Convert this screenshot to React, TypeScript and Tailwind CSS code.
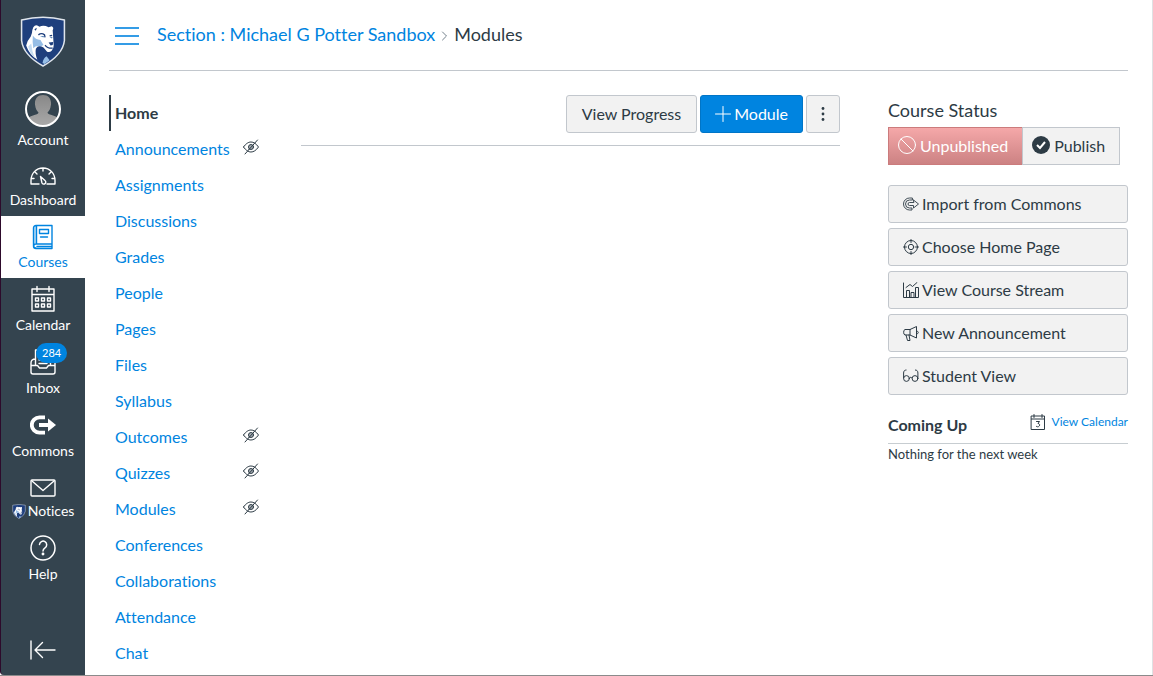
import type { ReactNode } from 'react';

type IconProps = { className?: string };

const stroke = { fill: 'none', stroke: 'currentColor', strokeLinecap: 'round', strokeLinejoin: 'round' } as const;

function Shield({ className }: IconProps) {
  return (
    <svg viewBox="0 0 45 50" className={className} aria-hidden="true">
      <path d="M1.500 4 Q22.500 -1.500 43.500 4 V24 Q42 38 22.500 49 Q3 38 1.500 24Z" fill="#1e3f7d" stroke="#dfe5ec" strokeWidth="1.500" />
      <path d="M13 11 Q15 8 17.500 9.500 L19 10.500 Q23 8.500 28 11 L31 10 Q33.500 11 32 14 L32.500 21 L33 29 Q33 32 31 34 Q29 36 26.500 35 L23 31 L20 29.500 Q17 29 15.500 32 Q14.500 37 17 43 Q9 38 6 29 Q7 24 10.500 20 Q12 17 12 14Z" fill="#fff" />
      <path d="M12.500 19 Q15 23 20 23.500 L23 28.500 L20 30 Q16 28.500 13 31.500 Q12 25 12.500 19Z" fill="#96bee6" />
      <path d="M11 27 Q11.500 35 14.500 41 Q9.500 37 8 30Z" fill="#c5dcf1" />
      <path d="M22 46 Q23 41 26 39.500 L29 43.500 L24 47Z" fill="#96bee6" />
      <path d="M14 13 L16.500 11.500 L15.500 14.500Z" fill="#1e3f7d" />
      <path d="M18 18.500 Q21 16 24 18.500 L24.500 21 M29 19.500 L31.500 19" fill="none" stroke="#1e3f7d" strokeWidth="1.300" />
      <path d="M19.500 19.500 L23.500 19.500 L23 21Z M29 20.500 H32 L31 22Z" fill="#5d87ba" />
      <path d="M28 26 L32.500 25.500 L32 28.500 L30 29Z" fill="#1e3f7d" />
      <path d="M24.500 28.500 Q27 32 32 31.500" fill="none" stroke="#1e3f7d" strokeWidth="1.200" />
    </svg>
  );
}

function AvatarIcon() {
  return (
    <svg viewBox="0 0 36 36" className="size-9" aria-hidden="true">
      <defs>
        <clipPath id="avatar"><circle cx="18" cy="18" r="16.500" /></clipPath>
        <linearGradient id="person" x2="0" y2="1"><stop stopColor="#888" /><stop offset="1" stopColor="#aaa" /></linearGradient>
      </defs>
      <circle cx="18" cy="18" r="17" fill="#34444f" />
      <g clipPath="url(#avatar)" fill="url(#person)">
        <path d="M18 4c5.500 0 8.500 4 8 9.500C25.500 18 24 20 22.500 21.500c0 1.500 2.500 2 5.500 3 4 1 6 3 7 6V36H1v-5c1-4 3-5.500 7-6.500 3-1 5.500-1.500 5.500-3-1.500-1.500-3-3.500-3.500-8C9.500 8 12.500 4 18 4Z" />
      </g>
      <circle cx="18" cy="18" r="17" fill="none" stroke="#fff" strokeWidth="2" />
    </svg>
  );
}

function DashboardIcon() {
  return (
    <svg viewBox="0 0 26 20" className="h-5 w-[26px]" {...stroke} strokeWidth="1.400" aria-hidden="true">
      <path d="M9 18H1v-3.500C1 7.500 6 2 13 2s12 5.500 12 12.500V18h-8M13 2v3M5 6l2 2M21 6l-2 2M1.500 12.500H4M22 12.500h2.500" />
      <path d="M10.500 10.500 15 14.500a2 2 0 1 1-3 2.500Z" />
    </svg>
  );
}

function CoursesIcon() {
  return (
    <svg viewBox="0 0 22 26" className="h-[26px] w-[22px]" {...stroke} strokeWidth="1.400" aria-hidden="true">
      <path d="M4 1.500h1v18H4L2 21V3Z" fill="#b5dbf6" stroke="none" />
      <path d="M20 20V1.500H4C2.500 1.500 1.500 2.500 1.500 4v18c0 1.500 1 2.500 2.500 2.500h16v-2H5M20 20H4c-3 0-3 4 0 4M4.500 2v18M20 20v4" />
      <path d="M7.500 5.500h9v4h-9ZM8.500 13h7" />
    </svg>
  );
}

function CalendarIcon() {
  return (
    <svg viewBox="0 0 24 28" className="h-7 w-6" {...stroke} strokeWidth="1.400" aria-hidden="true">
      <path d="M1 4h22v22H1ZM1 9.500h22M6 1.500v5M18 1.500v5M9 4h6" />
      <path d="M4.500 13h3v3h-3ZM10.500 13h3v3h-3ZM16.500 13h3v3h-3ZM4.500 19h3v3h-3ZM10.500 19h3v3h-3ZM16.500 19h3v3h-3Z" />
    </svg>
  );
}

function InboxIcon() {
  return (
    <svg viewBox="0 0 26 26" className="size-[26px]" {...stroke} strokeWidth="1.400" aria-hidden="true">
      <path d="M5.500 16V1h15v15M5.500 10C2.500 10 1 11.500 1 14v9c0 1.500.5 2 2 2h20c1.500 0 2-.5 2-2v-9c0-2.500-1.500-4-4.500-4M1 16.500h6.500L9.500 19h7l2-2.500H25M9 11h5M9 14.500h8" />
    </svg>
  );
}

function CommonsIcon() {
  return (
    <svg viewBox="0 0 26 20" className="h-5 w-[26px]" aria-hidden="true">
      <path d="M15 2.300H9.500a7.700 7.700 0 0 0 0 15.400H15M9 10h10" fill="none" stroke="currentColor" strokeWidth="3.800" />
      <path d="M18 3.500 26 10l-8 6.500Z" fill="currentColor" />
    </svg>
  );
}

function NoticesIcon() {
  return (
    <svg viewBox="0 0 26 18" className="h-[18px] w-[26px]" {...stroke} strokeWidth="1.400" aria-hidden="true">
      <rect x="1" y="1" width="24" height="16" rx="1" />
      <path d="m2 2 11 9.500L24 2" />
    </svg>
  );
}

function HelpIcon() {
  return (
    <svg viewBox="0 0 26 26" className="size-[26px]" {...stroke} strokeWidth="1.500" aria-hidden="true">
      <circle cx="13" cy="13" r="12" />
      <path d="M9.500 9.500a3.600 3.600 0 1 1 5.500 3.300c-1.400.9-2 1.500-2 3.200" />
      <circle cx="13" cy="19" r=".7" fill="currentColor" />
    </svg>
  );
}

function HiddenIcon() {
  return (
    <svg viewBox="0 0 16 16" className="size-4" {...stroke} strokeWidth="1" aria-hidden="true">
      <path d="M.5 8C3 4.500 5.500 3 8 3s5 1.500 7.500 5C13 11.500 10.500 13 8 13S3 11.500.5 8ZM2 15 14.500 1" />
      <circle cx="8" cy="8" r="2.500" fill="#a5adb3" />
      <path d="m6 10.500 4.500-5" />
    </svg>
  );
}

function ImportIcon() {
  return (
    <svg viewBox="0 0 16 16" className="size-4" {...stroke} strokeWidth=".9" aria-hidden="true">
      <path d="M9 2H6.500a6 6 0 0 0 0 12H9v-2H6.500a4 4 0 0 1 0-8H9ZM10.500 4l5 4-5 4V9.500h-4a1.500 1.500 0 0 1 0-3h4Z" />
    </svg>
  );
}

function TargetIcon() {
  return (
    <svg viewBox="0 0 16 16" className="size-4" {...stroke} strokeWidth="1" aria-hidden="true">
      <circle cx="8" cy="8" r="6.500" />
      <circle cx="8" cy="8" r="2.700" />
      <path d="M8 .5v3M8 12.500v3M.5 8h3M12.500 8h3" />
    </svg>
  );
}

function StreamIcon() {
  return (
    <svg viewBox="0 0 16 16" className="size-4" {...stroke} strokeWidth="1" aria-hidden="true">
      <path d="M.5 1v14.500h15V5.500h-3v9.500M3.500 15V8.500h3V15M8 15v-4.500h3V15M3 5.500 7 2.500l2.500 2 4.500-4" />
    </svg>
  );
}

function MegaphoneIcon() {
  return (
    <svg viewBox="0 0 16 16" className="size-4" {...stroke} strokeWidth="1" aria-hidden="true">
      <path d="M7 4.500H2C.2 4.500.2 10 2 10h5l6.500 3V1.500L7 4.500V10M3 10l1.500 5.500H7L6 10M13.500 6c2.500 0 2.500 3 0 3" />
    </svg>
  );
}

function GlassesIcon() {
  return (
    <svg viewBox="0 0 16 16" className="size-4" {...stroke} strokeWidth="1" aria-hidden="true">
      <circle cx="3.500" cy="10.500" r="2.900" />
      <circle cx="12" cy="10.500" r="2.900" />
      <path d="M.6 10V5c0-2 1-3 2.500-3M14.900 10V5c0-2-1-3-2.500-3M6.400 10c.5-1 2-1 2.700 0" />
    </svg>
  );
}

type NavItem = { label: string; icon: ReactNode; size: string; active?: boolean; badge?: string; shield?: boolean };

const globalNav: NavItem[] = [
  { label: 'Account', icon: <AvatarIcon />, size: 'h-[68px]' },
  { label: 'Dashboard', icon: <DashboardIcon />, size: 'h-[60px] pt-1.5' },
  { label: 'Courses', icon: <CoursesIcon />, size: 'h-[62px] pt-1.5', active: true },
  { label: 'Calendar', icon: <CalendarIcon />, size: 'h-[63px] pt-1' },
  { label: 'Inbox', icon: <InboxIcon />, size: 'h-[63px] pt-1', badge: '284' },
  { label: 'Commons', icon: <CommonsIcon />, size: 'h-[63px] pt-1' },
  { label: 'Notices', icon: <NoticesIcon />, size: 'h-[60px] pt-2', shield: true },
  { label: 'Help', icon: <HelpIcon />, size: 'h-[63px] pt-1' },
];

const courseNav = [
  { label: 'Home' },
  { label: 'Announcements', hidden: true },
  { label: 'Assignments' },
  { label: 'Discussions' },
  { label: 'Grades' },
  { label: 'People' },
  { label: 'Pages' },
  { label: 'Files' },
  { label: 'Syllabus' },
  { label: 'Outcomes', hidden: true },
  { label: 'Quizzes', hidden: true },
  { label: 'Modules', hidden: true },
  { label: 'Conferences' },
  { label: 'Collaborations' },
  { label: 'Attendance' },
  { label: 'Chat' },
];

const actions = [
  { label: 'Import from Commons', icon: <ImportIcon /> },
  { label: 'Choose Home Page', icon: <TargetIcon /> },
  { label: 'View Course Stream', icon: <StreamIcon /> },
  { label: 'New Announcement', icon: <MegaphoneIcon /> },
  { label: 'Student View', icon: <GlassesIcon /> },
];

function GlobalNav() {
  return (
    <nav aria-label="Global navigation" className="flex w-[85px] shrink-0 flex-col rounded-bl border-l border-[#2d0a2b] bg-[#34444f] text-white">
      <a href="#home" aria-label="Home page" className="flex h-[88px] justify-center pt-4">
        <Shield className="h-[51px] w-[46px]" />
      </a>
      {globalNav.map((item) => (
        <a
          key={item.label}
          href={`#${item.label.toLowerCase()}`}
          className={`flex flex-col items-center justify-end pb-1.5 ${item.size} ${item.active ? 'bg-white text-[#0084e0]' : ''}`}
        >
          <span className="relative flex grow items-center justify-center">
            {item.icon}
            {item.badge && (
              <span className="absolute -top-0.5 left-[6px] rounded-full bg-[#0084e0] px-1.5 text-[11px] leading-5">{item.badge}</span>
            )}
          </span>
          <span className="flex items-center gap-0.5 text-sm leading-5">
            {item.shield && <Shield className="h-[15px] w-[14px]" />}
            {item.label}
          </span>
        </a>
      ))}
      <button type="button" aria-label="Minimize global navigation" className="mt-auto mb-[15px] flex h-5 items-center justify-center">
        <svg viewBox="0 0 26 20" className="h-5 w-[26px]" {...stroke} strokeWidth="1.400" aria-hidden="true">
          <path d="M1 1v18M25 10H5M12.500 2.500 5 10l7.500 7.500" />
        </svg>
      </button>
    </nav>
  );
}

function CourseNav() {
  return (
    <nav aria-label="Course navigation" className="w-[156px] shrink-0">
      <ul>
        {courseNav.map((item, i) => (
          <li key={item.label} className="h-9">
            <a
              href={`#course-${item.label.toLowerCase()}`}
              className={`flex h-full items-center justify-between border-l-2 pr-1.5 pl-1 ${i === 0 ? 'border-[#2d3b45] font-bold text-[#2d3b45]' : 'border-transparent text-[#0084e0]'}`}
            >
              {item.label}
              {item.hidden && <span className="pb-1 text-[#2d3b45]"><HiddenIcon /></span>}
            </a>
          </li>
        ))}
      </ul>
    </nav>
  );
}

function Sidebar() {
  return (
    <aside className="w-60 shrink-0 pt-[3px]">
      <h2 className="text-lg leading-6">Course Status</h2>
      <div className="mt-[5px] flex h-[38px]">
        <button type="button" className="flex items-center gap-[3px] border border-r-0 border-[#cb7b7c] bg-linear-to-b from-[#f5a8a9] to-[#cc8283] pr-3.5 pl-2 text-white">
          <svg viewBox="0 0 20 20" className="-mt-0.5 size-5" {...stroke} aria-hidden="true">
            <circle cx="10" cy="10" r="8.500" />
            <path d="m4 4 12 12" />
          </svg>
          Unpublished
        </button>
        <button type="button" className="flex items-center gap-[3px] border border-[#c2c7cd] bg-[#f2f2f2] pr-3.5 pl-2">
          <svg viewBox="0 0 20 20" className="-mt-0.5 size-5" aria-hidden="true">
            <circle cx="10" cy="10" r="9" fill="#2d3b45" />
            <path d="m6 10 3 3 5-6" fill="none" stroke="#fff" strokeWidth="2" />
          </svg>
          Publish
        </button>
      </div>
      <ul className="mt-5 flex flex-col gap-[5px]">
        {actions.map((action) => (
          <li key={action.label}>
            <a href={`#${action.label.toLowerCase().replaceAll(' ', '-')}`} className="flex h-[38px] items-center gap-[3px] rounded-[3px] border border-[#c2c7cd] bg-[#f2f2f2] px-3.5">
              {action.icon}
              {action.label}
            </a>
          </li>
        ))}
      </ul>
      <section className="mt-4">
        <div className="flex h-[33px] justify-between border-b border-[#c7cdd1]">
          <h2 className="pt-0.5 font-bold">Coming Up</h2>
          <a href="#view-calendar" className="flex h-[22px] items-center gap-1.5 text-xs text-[#0084e0]">
            <svg viewBox="0 0 16 16" className="size-4 text-[#2d3b45]" {...stroke} aria-hidden="true">
              <path d="M1.500 2h13v13.500h-13ZM1.500 5h13M4 .5v3M12 .5v3M6.500 7.500h3L8 9.500c2.500 0 2 3.500-.5 3.300l-1-.4" />
            </svg>
            View Calendar
          </a>
        </div>
        <p className="text-[13px] leading-5">Nothing for the next week</p>
      </section>
    </aside>
  );
}

export default function App() {
  return (
    <div className="flex min-h-screen border-b border-[#8b8b8b] bg-white text-base text-[#2d3b45] font-['Lato',sans-serif] [font-variant-ligatures:none]">
      <GlobalNav />
      <div className="min-w-0 grow border-r border-[#dfe1e3] px-6">
        <header className="flex h-[71px] items-center border-b border-[#c2c7cd]">
          <button type="button" aria-label="Toggle course navigation" className="ml-1.5 flex w-6 flex-col gap-1.5 pt-0.5">
            <span className="h-0.5 w-full bg-[#349ce6]" />
            <span className="h-0.5 w-full bg-[#349ce6]" />
            <span className="h-0.5 w-full bg-[#349ce6]" />
          </button>
          <nav aria-label="Breadcrumb" className="ml-[18px] flex items-center gap-1.5 pb-0.5 text-lg">
            <a href="#section" className="text-[#0084e0]">Section : Michael G Potter Sandbox</a>
            <svg viewBox="0 0 7 12" className="mt-1 h-3 w-[7px] text-[#73818c]" {...stroke} aria-hidden="true">
              <path d="m1.500 2 4 4-4 4" />
            </svg>
            <span>Modules</span>
          </nav>
        </header>
        <div className="flex pt-6">
          <CourseNav />
          <main className="mr-12 ml-9 min-w-0 grow">
            <div className="flex h-[51px] justify-end gap-[3px] border-b border-[#c2c7cd]">
              <button type="button" className="h-[38px] rounded-[3px] border border-[#c2c7cd] bg-[#f2f2f2] px-[15px]">View Progress</button>
              <button type="button" className="flex h-[38px] items-center gap-[3px] rounded-[3px] border border-[#0075c7] bg-[#0084e0] px-3.5 text-white">
                <svg viewBox="0 0 16 16" className="size-4" {...stroke} aria-hidden="true">
                  <path d="M8 .5v15M.5 8h15" />
                </svg>
                Module
              </button>
              <button type="button" aria-label="More options" className="flex h-[38px] w-[34px] items-center justify-center rounded-[3px] border border-[#c2c7cd] bg-[#f2f2f2]">
                <svg viewBox="0 0 4 16" className="h-4 w-1" fill="currentColor" aria-hidden="true">
                  <circle cx="2" cy="2.500" r="1.400" />
                  <circle cx="2" cy="8" r="1.400" />
                  <circle cx="2" cy="13.500" r="1.400" />
                </svg>
              </button>
            </div>
          </main>
          <Sidebar />
        </div>
      </div>
    </div>
  );
}
